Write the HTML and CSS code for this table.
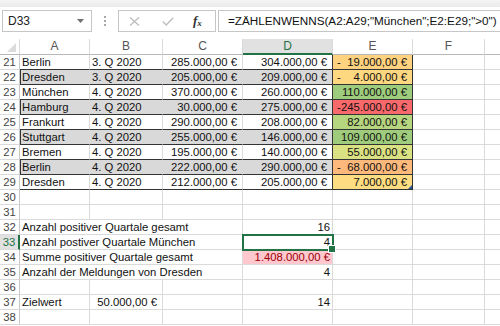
FILE: index.html
```html
<!DOCTYPE html>
<html lang="de">
<head>
<meta charset="utf-8">
<title>Excel</title>
<link rel="stylesheet" href="styles.css">
</head>
<body>
<div class="app">
  <div class="edge"></div>
  <div class="fbar">
    <div class="namebox"><span>D33</span><svg width="7" height="4" viewBox="0 0 7 4"><path d="M0 0h7L3.5 4z" fill="#6f6f6f"/></svg></div>
    <div class="grip"><i></i><i></i><i></i></div>
    <div class="fbtns">
      <svg class="ic-x" width="11" height="9" viewBox="0 0 11 9"><path d="M1 0.5l9 8M10 0.5l-9 8" stroke="#bdbdbd" stroke-width="1.3" fill="none"/></svg>
      <svg class="ic-ok" width="12" height="9" viewBox="0 0 12 9"><path d="M0.8 4.6l3.4 3.4L11.2 0.8" stroke="#bdbdbd" stroke-width="1.4" fill="none"/></svg>
      <span class="fx"><i>f</i><sub>x</sub></span>
    </div>
    <div class="formula">=ZÄHLENWENNS(A2:A29;"München";E2:E29;"&gt;0")</div>
  </div>

  <div class="sheet">
    <div class="h corner"><svg width="9" height="9" viewBox="0 0 9 9"><path d="M9 0V9H0z" fill="#dcdcdc"/></svg></div>
    <div class="h">A</div><div class="h">B</div><div class="h">C</div><div class="h on">D</div><div class="h">E</div><div class="h">F</div><div class="h"></div>

    <div class="rh">21</div>
    <div class="c t">Berlin</div><div class="c t">3. Q 2020</div><div class="c t r cur">285.000,00 €</div><div class="c t r cur dr">304.000,00 €</div>
    <div class="c e" style="background:#fed27f"><span class="m">-</span><span>19.000,00 €</span></div><div class="c"></div><div class="c"></div>

    <div class="rh">22</div>
    <div class="c t g gl">Dresden</div><div class="c t g">3. Q 2020</div><div class="c t g r cur">205.000,00 €</div><div class="c t g r cur dr">209.000,00 €</div>
    <div class="c e" style="background:#fed880"><span class="m">-</span><span>4.000,00 €</span></div><div class="c"></div><div class="c"></div>

    <div class="rh">23</div>
    <div class="c t">München</div><div class="c t">4. Q 2020</div><div class="c t r cur">370.000,00 €</div><div class="c t r cur dr">260.000,00 €</div>
    <div class="c e" style="background:#9dcc7c"><span>110.000,00 €</span></div><div class="c"></div><div class="c"></div>

    <div class="rh">24</div>
    <div class="c t g gl">Hamburg</div><div class="c t g">4. Q 2020</div><div class="c t g r cur">30.000,00 €</div><div class="c t g r cur dr">275.000,00 €</div>
    <div class="c e" style="background:#f8696b"><span class="m">-</span><span>245.000,00 €</span></div><div class="c"></div><div class="c"></div>

    <div class="rh">25</div>
    <div class="c t">Frankurt</div><div class="c t">4. Q 2020</div><div class="c t r cur">290.000,00 €</div><div class="c t r cur dr">208.000,00 €</div>
    <div class="c e" style="background:#b6d57f"><span>82.000,00 €</span></div><div class="c"></div><div class="c"></div>

    <div class="rh">26</div>
    <div class="c t g gl">Stuttgart</div><div class="c t g">4. Q 2020</div><div class="c t g r cur">255.000,00 €</div><div class="c t g r cur dr">146.000,00 €</div>
    <div class="c e" style="background:#9ecc7c"><span>109.000,00 €</span></div><div class="c"></div><div class="c"></div>

    <div class="rh">27</div>
    <div class="c t">Bremen</div><div class="c t">4. Q 2020</div><div class="c t r cur">195.000,00 €</div><div class="c t r cur dr">140.000,00 €</div>
    <div class="c e" style="background:#d9e182"><span>55.000,00 €</span></div><div class="c"></div><div class="c"></div>

    <div class="rh">28</div>
    <div class="c t g gl">Berlin</div><div class="c t g">4. Q 2020</div><div class="c t g r cur">222.000,00 €</div><div class="c t g r cur dr">290.000,00 €</div>
    <div class="c e" style="background:#fcb97b"><span class="m">-</span><span>68.000,00 €</span></div><div class="c"></div><div class="c"></div>

    <div class="rh">29</div>
    <div class="c t">Dresden</div><div class="c t">4. Q 2020</div><div class="c t r cur">212.000,00 €</div><div class="c t r cur dr">205.000,00 €</div>
    <div class="c e mark" style="background:#fedc81"><span>7.000,00 €</span></div><div class="c"></div><div class="c"></div>

    <div class="rh">30</div>
    <div class="c"></div><div class="c"></div><div class="c"></div><div class="c"></div><div class="c"></div><div class="c"></div><div class="c"></div>

    <div class="rh">31</div>
    <div class="c"></div><div class="c"></div><div class="c"></div><div class="c"></div><div class="c"></div><div class="c"></div><div class="c"></div>

    <div class="rh">32</div>
    <div class="c span3">Anzahl positiver Quartale gesamt</div><div class="c r">16</div><div class="c"></div><div class="c"></div><div class="c"></div>

    <div class="rh on">33</div>
    <div class="c span3">Anzahl postiver Quartale München</div><div class="c r sel">4</div><div class="c"></div><div class="c"></div><div class="c"></div>

    <div class="rh">34</div>
    <div class="c span3">Summe positiver Quartale gesamt</div><div class="c r bad">1.408.000,00 €</div><div class="c"></div><div class="c"></div><div class="c"></div>

    <div class="rh">35</div>
    <div class="c span3">Anzahl der Meldungen von Dresden</div><div class="c r">4</div><div class="c"></div><div class="c"></div><div class="c"></div>

    <div class="rh">36</div>
    <div class="c"></div><div class="c"></div><div class="c"></div><div class="c"></div><div class="c"></div><div class="c"></div><div class="c"></div>

    <div class="rh">37</div>
    <div class="c">Zielwert</div><div class="c r cur">50.000,00 €</div><div class="c"></div><div class="c r">14</div><div class="c"></div><div class="c"></div><div class="c"></div>

    <div class="rh">38</div>
    <div class="c"></div><div class="c"></div><div class="c"></div><div class="c"></div><div class="c"></div><div class="c"></div><div class="c"></div>
  </div>
</div>
</body>
</html>
```

FILE: styles.css
```css
* { box-sizing: border-box; }
html, body { margin: 0; padding: 0; background: #fff; overflow: hidden; }
body { font-family: "Liberation Sans", Arial, sans-serif; width: 500px; height: 326px; }
.app { width: 500px; height: 326px; overflow: hidden; }

.edge { height: 7px; background: linear-gradient(#f4f4f4, #ebebeb); }

.fbar { height: 32px; display: flex; align-items: flex-start; padding-top: 3px; }
.namebox {
  margin-left: 2px; width: 90px; height: 22px; border: 1px solid #c6c6c6;
  display: flex; align-items: center; justify-content: space-between;
  padding: 0 7px 0 5px; font-size: 12px; color: #222;
}
.grip { width: 26px; height: 22px; display: flex; flex-direction: column; align-items: center; justify-content: center; gap: 2px; }
.grip i { display: block; width: 2px; height: 2px; background: #a8a8a8; }
.fbtns {
  width: 98px; height: 22px; border: 1px solid #c6c6c6;
  display: flex; align-items: center; padding-left: 10px;
}
.ic-x { margin-right: 22px; }
.ic-ok { margin-right: 19px; }
.fx { font-family: "Liberation Serif", "Times New Roman", serif; font-size: 13px; color: #333; font-weight: bold; line-height: 1; }
.fx i { font-style: italic; }
.fx sub { font-size: 9px; font-style: italic; vertical-align: -1px; }
.formula {
  margin-left: 2px; flex: 1; margin-right: -8px; height: 22px; border: 1px solid #c6c6c6;
  font-size: 11.7px; padding-left: 9px; line-height: 20px; white-space: nowrap; color: #111;
}

.sheet {
  display: grid;
  grid-template-columns: 20px 70px 73px 80px 90px 80px 72px 60px;
  grid-template-rows: 16px;
  grid-auto-rows: 15px;
  font-size: 11.3px;
  color: #111;
}
.h {
  border-right: 1px solid #dadada; border-bottom: 1px solid #b8b8b8;
  text-align: center; color: #555; font-size: 12px; line-height: 15px; background: #fff;
}
.h.on { background: #e1e1e1; color: #217346; border-bottom: 2px solid #217346; }
.corner { display: flex; align-items: flex-end; justify-content: flex-end; padding: 0 3px 2px 0; }
.corner svg { display: block; }

.rh {
  border-right: 1px solid #c8c8c8; border-bottom: 1px solid #dadada;
  text-align: center; color: #444; line-height: 14px; font-size: 11.3px;
}
.rh.on { background: #e1e1e1; color: #217346; border-right: 2px solid #217346; }

.c {
  border-right: 1px solid #dadada; border-bottom: 1px solid #dadada;
  padding: 0 2px; line-height: 14px; white-space: nowrap;
}
.r { text-align: right; }
.cur { padding-right: 5px; }
.t { border-bottom-color: #333; }
.g { background: #d9d9d9; border-right-color: #d9d9d9; }
.gl { box-shadow: inset 1px 0 #333; }
.dr { border-right-color: #333; }
.e {
  display: flex; justify-content: flex-end;
  border-right-color: #333; border-bottom-color: #333;
  padding: 0 5px 0 4px;
}
.e .m { margin-right: auto; }
.mark { position: relative; }
.mark::after {
  content: ""; position: absolute; right: 0; bottom: 0;
  border-style: solid; border-width: 0 0 4px 4px;
  border-color: transparent transparent #2b579a transparent;
}
.span3 { grid-column: span 3; }
.bad { background: #ffc7ce; color: #9c0006; }
.sel { position: relative; }
.sel::before {
  content: ""; position: absolute; left: -1px; top: -1px; right: -2px; bottom: -2px;
  border: 2px solid #217346;
}
.sel::after {
  content: ""; position: absolute; right: -4px; bottom: -4px; width: 6px; height: 6px;
  background: #217346; border: 1px solid #fff;
}
```
